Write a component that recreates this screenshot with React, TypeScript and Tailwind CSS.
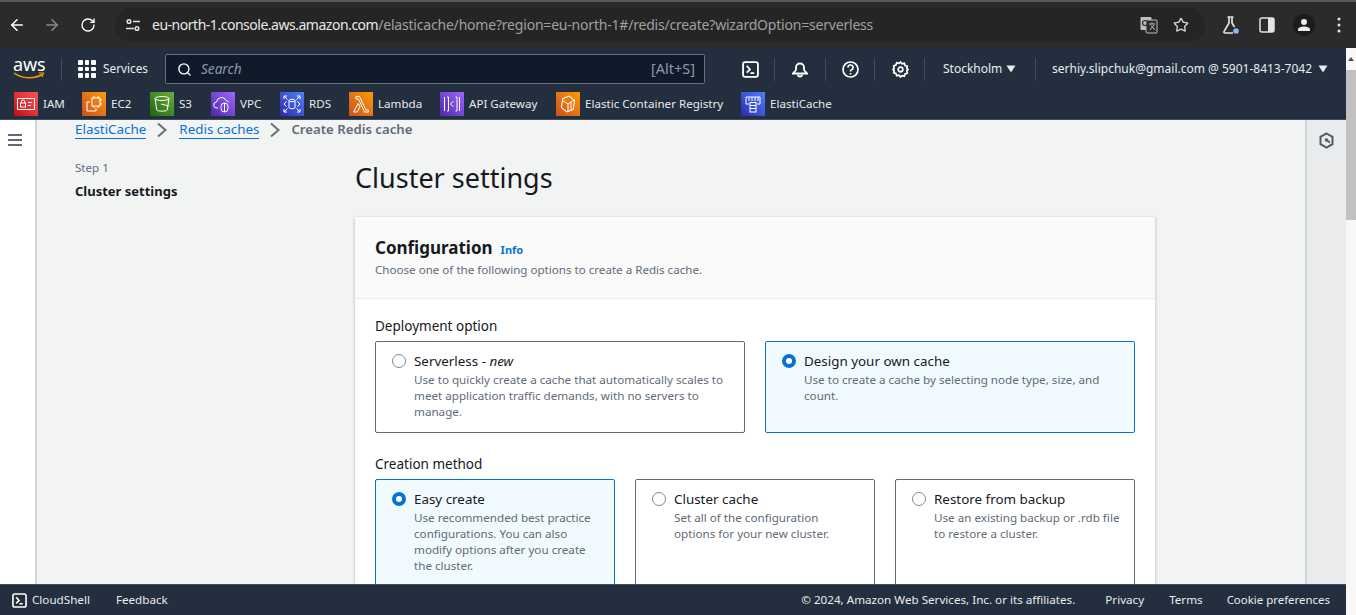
import React from "react";
import { ArrowLeft, ArrowRight, RotateCw, Star, Search } from "lucide-react";

const Ic = ({ from, to, children }: { from: string; to: string; children: React.ReactNode }) => (
  <span className={`w-6 h-6 shrink-0 flex items-center justify-center bg-linear-to-tr ${from} ${to}`}>
    <svg width="20" height="20" viewBox="0 0 20 20" fill="none" stroke="white" strokeWidth="1">{children}</svg>
  </span>
);

const shortcuts = [
  { label: "IAM", w: "w-[68px]", from: "from-[#bd0816]", to: "to-[#ff5252]", icon: <><path d="M1.500 4.500h17v11h-17z" /><rect x="4.500" y="9" width="5" height="4" /><path d="M5.500 9V7.500a1.500 1.500 0 0 1 3 0V9M12 8.500h4M12 11.500h3" /></> },
  { label: "EC2", w: "w-[68px]", from: "from-[#c8511b]", to: "to-[#ff9900]", icon: <><rect x="8" y="4" width="8" height="8" /><path d="M6 8H3v9h9v-3M10 2v2M14 2v2M10 12v2M14 12v2M16 6h2M16 10h2" /></> },
  { label: "S3", w: "w-[61px]", from: "from-[#1b660f]", to: "to-[#6cae3e]", icon: <><ellipse cx="10" cy="4.500" rx="7" ry="2" /><path d="M3 4.500l1.800 11.500c.5 1.500 9.900 1.500 10.400 0L17 4.500M9 10l8 2" /></> },
  { label: "VPC", w: "w-[69px]", from: "from-[#4d27a8]", to: "to-[#a166ff]", icon: <><path d="M5 14H4a3 3 0 0 1-.5-6A5 5 0 0 1 13 6.500a3.500 3.500 0 0 1 3 2" /><rect x="8" y="9" width="7" height="9" rx="3.500" /><path d="M11.500 9v9" /></> },
  { label: "RDS", w: "w-[69px]", from: "from-[#2e27ad]", to: "to-[#527fff]", icon: <><ellipse cx="10" cy="6.500" rx="3" ry="1.200" /><path d="M7 6.500v7c0 1.600 6 1.600 6 0v-7M2 2l3.500 3.500M18 2l-3.500 3.500M2 18l3.500-3.500M18 18l-3.500-3.500M2 5V2h3M15 2h3v3M2 15v3h3M18 15v3h-3M4.500 7.500L2 10l2.500 2.500M15.500 7.500L18 10l-2.500 2.500" /></> },
  { label: "Lambda", w: "w-[91px]", from: "from-[#c8511b]", to: "to-[#ff9900]", icon: <path d="M5 2.500h3.500l6.500 13.500h2.500v2h-4L7.500 5H5zM7.200 9.500L9 12.800 6.200 18H2.500z" /> },
  { label: "API Gateway", w: "w-[116px]", from: "from-[#4d27a8]", to: "to-[#a166ff]", icon: <><path d="M2.500 3v14M5 3h1.500v14H5M13.500 3H15v14h-1.500M17.500 3v14" /><path d="M11.500 7L8.500 10l3 3" /></> },
  { label: "Elastic Container Registry", w: "w-[185px]", from: "from-[#c8511b]", to: "to-[#ff9900]", icon: <><path d="M10 2l6 3.500v9L10 18l-6-3.500v-9z" transform="rotate(8 10 10)" /><path d="M10 10l6-4M10 10v8M10 10L4 6M13 8v8" /></> },
  { label: "ElastiCache", w: "", from: "from-[#2e27ad]", to: "to-[#527fff]", icon: <><path d="M3 3h14v7h-3M3 3v7h3" /><path d="M6 3v4M9 3v4M12 3v4M15 3v4" /><rect x="7" y="8.500" width="6" height="9.500" /><path d="M7 11.500h6M7 14.500h6" /></> },
];

const Divider = () => <span className="block w-px h-[23px] bg-[#414d5c]" />;

const Caret = ({ cls }: { cls?: string }) => (
  <svg width="10" height="8" viewBox="0 0 10 8" className={cls}><path d="M0.500 0.500h9L5 7.500z" fill="#e9ebed" /></svg>
);

const CloudShellIcon = ({ s = 17 }: { s?: number }) => (
  <svg width={s} height={s} viewBox="0 0 16 16" fill="none" stroke="white" strokeWidth="1.700" className="block">
    <rect x="1" y="1" width="14" height="14" rx="2" />
    <path d="M4.500 4.500L7.500 8l-3 3M8 11.500h3.500" />
  </svg>
);

const Radio = ({ on }: { on?: boolean }) =>
  on ? (
    <span className="w-3.5 h-3.5 rounded-full bg-[#0972d3] flex items-center justify-center shrink-0">
      <span className="w-1.5 h-1.5 rounded-full bg-white" />
    </span>
  ) : (
    <span className="block w-3.5 h-3.5 rounded-full border border-[#7d8998] bg-white shrink-0" />
  );

const Card = ({ on, title, desc, cls }: { on?: boolean; title: React.ReactNode; desc: string; cls: string }) => (
  <div className={`rounded-[2px] border flex gap-2 pl-[16px] pr-[12px] pt-[11px] ${on ? "border-[#0972d3] bg-[#f1faff]" : "border-[#5f6b7a] bg-white"} ${cls}`}>
    <div className="mt-[1px] shrink-0"><Radio on={on} /></div>
    <div>
      <div className="text-[13.4px] leading-[16px] text-[#16191f]">{title}</div>
      <div className="text-[11.65px] leading-[16px] text-[#5f6b7a] mt-[3px]">{desc}</div>
    </div>
  </div>
);

const Chevron = () => (
  <svg width="14" height="16" viewBox="0 0 14 16" fill="none" stroke="#687078" strokeWidth="2"><path d="M3 1.500L10.500 8 3 14.500" /></svg>
);

export default function App() {
  return (
    <div className="w-[1356px] h-[615px] overflow-hidden flex flex-col font-['Noto_Sans','Open_Sans',sans-serif] bg-white">
      {/* browser chrome */}
      <div className="h-12 shrink-0 bg-[#2b2b2b] border-t-2 border-[#5a5a5a] flex items-center pl-2 text-[#e3e3e3]">
        <div className="w-[107px] flex items-center">
          <ArrowLeft size={18} className="text-white" strokeWidth={2} />
          <ArrowRight size={18} className="ml-[17px] text-[#8a8a8a]" strokeWidth={2} />
          <RotateCw size={16} className="ml-[19px] text-white" strokeWidth={2} />
        </div>
        <div className="w-[1090px] h-[34px] rounded-full bg-[#252525] flex items-center pl-2.5">
          <svg width="16" height="16" viewBox="0 0 16 16" fill="none" stroke="#e3e3e3" strokeWidth="1.500" className="shrink-0">
            <circle cx="4" cy="4.500" r="1.800" /><path d="M8 4.500h7M1 11.500h8" /><circle cx="12" cy="11.500" r="1.800" />
          </svg>
          <div className="ml-[11px] text-[14px] leading-none whitespace-nowrap -mt-[1px]">
            <span className="text-[#e8e8e8] tracking-[-0.48px]">eu-north-1.console.aws.amazon.com</span>
            <span className="text-[#a0a0a0] tracking-[-0.2px]">/elasticache/home?region=eu-north-1#/redis/create?wizardOption=serverless</span>
          </div>
          <div className="ml-auto flex items-center mr-[15px] gap-[15px]">
            <svg width="18" height="18" viewBox="0 0 18 18">
              <rect x="0.500" y="1" width="11" height="13" rx="1" fill="#bdbdbd" />
              <rect x="6" y="4" width="11" height="13" rx="1" fill="#2b2b2b" stroke="#bdbdbd" />
              <circle cx="5" cy="7" r="2.500" fill="none" stroke="#2b2b2b" strokeWidth="1.200" />
              <path d="M9 8h6M12 6.500v1.500M10 14l4-5M11 9.500l4 4.500" stroke="#bdbdbd" fill="none" />
            </svg>
            <Star size={16} strokeWidth={2} className="text-[#d5d5d5] mr-[1px]" />
          </div>
        </div>
        <svg width="18" height="20" viewBox="0 0 18 20" fill="none" stroke="#e3e3e3" strokeWidth="1.700" className="ml-[17px]">
          <path d="M5.500 2h6M7 2v6L2 16.500c-.3.800.2 1.500 1 1.500h8M10 2v6l2.500 4" />
          <circle cx="14" cy="16" r="2.800" fill="#8ab4f8" stroke="none" />
        </svg>
        <svg width="16" height="16" viewBox="0 0 16 16" className="ml-[19px]">
          <rect x="1" y="1" width="14" height="14" rx="2" fill="none" stroke="#e3e3e3" strokeWidth="1.500" />
          <rect x="9" y="1" width="6" height="14" fill="#e3e3e3" />
        </svg>
        <span className="ml-[18px] w-[22px] h-[22px] rounded-full bg-[#1c1c1c] flex items-center justify-center">
          <svg width="14" height="14" viewBox="0 0 14 14" fill="#ececec"><circle cx="7" cy="4" r="3" /><path d="M1 13v-1.500C1 9.500 4 8.500 7 8.500s6 1 6 3V13z" /></svg>
        </span>
        <svg width="4" height="16" viewBox="0 0 4 16" fill="#e3e3e3" className="ml-[22px]">
          <circle cx="2" cy="2" r="1.500" /><circle cx="2" cy="8" r="1.500" /><circle cx="2" cy="14" r="1.500" />
        </svg>
      </div>

      <div className="flex-1 min-h-0 flex">
        <div className="w-[1346px] flex flex-col min-h-0">
          {/* AWS nav */}
          <div className="h-[72px] shrink-0 bg-[#232f3e] border-b border-[#414d5c]">
            <div className="h-10 pt-[2px] flex items-center text-[#e9ebed] text-[12px]">
              <div className="w-[61px] pl-[13px] h-full">
                <div className="text-white text-[18px] leading-none font-normal pt-[5px] tracking-[-0.1px]">aws</div>
                <svg width="32" height="8" viewBox="0 0 32 8" fill="none" className="block -mt-[1px]">
                  <path d="M1 1c8 6 21 6 28 1.500" stroke="#ff9900" strokeWidth="1.500" />
                  <path d="M26 1h4.500L29 5" stroke="#ff9900" strokeWidth="1.200" />
                </svg>
              </div>
              <Divider />
              <div className="ml-[16px] w-[18px] h-[18px] grid grid-cols-3 gap-[2px]">
                {Array.from({ length: 9 }).map((_, i) => <span key={i} className="bg-white rounded-[1px]" />)}
              </div>
              <span className="ml-[7px] w-[62px] text-[11.8px]">Services</span>
              <div className="w-[540px] h-[30px] rounded-[2px] border border-[#687078] bg-[#0f1b2a] flex items-center pl-[11px] pr-[9px]">
                <Search size={15} strokeWidth={2.200} className="text-white" />
                <span className="ml-[9px] mt-[1px] italic text-[13.6px] text-[#8d99a8]">Search</span>
                <span className="ml-auto text-[14.500px] text-[#8d99a8]">[Alt+S]</span>
              </div>
              <span className="ml-[37px]"><CloudShellIcon /></span>
              <span className="ml-[15px]"><Divider /></span>
              <svg width="16" height="17" viewBox="0 0 16 17" fill="none" stroke="white" strokeWidth="1.800" className="ml-[17px]">
                <path d="M1 12.500h14L12 9V6.500a4 4 0 0 0-8 0V9z" /><path d="M6 13.500a2 2 0 0 0 4 0" />
              </svg>
              <span className="ml-[17px]"><Divider /></span>
              <svg width="17" height="17" viewBox="0 0 17 17" fill="none" stroke="white" strokeWidth="1.700" className="ml-[16px]">
                <circle cx="8.500" cy="8.500" r="7.500" />
                <path d="M6 6.500a2.500 2.500 0 1 1 3.500 2.300c-.7.300-1 .8-1 1.700M8.500 12v1.500" />
              </svg>
              <span className="ml-[15px]"><Divider /></span>
              <svg width="17" height="17" viewBox="0 0 17 17" fill="none" stroke="white" strokeWidth="1.700" className="ml-[17px]">
                <path d="M8.500 1l1.500 1.800 2.300-.5.800 2.200 2.200.8-.5 2.200 1.200 1-1.200 1.500.5 2.200-2.200.8-.8 2.200-2.300-.5L8.500 16 7 14.200l-2.300.5-.8-2.200-2.200-.8.500-2.200L1 8.500l1.200-1.500-.5-2.200 2.200-.8.800-2.200 2.300.5z" />
                <circle cx="8.500" cy="8.500" r="2.300" />
              </svg>
              <span className="ml-[15px]"><Divider /></span>
              <span className="ml-[18px] w-[60px] whitespace-nowrap">Stockholm</span>
              <Caret cls="ml-[3px]" />
              <span className="ml-[19px]"><Divider /></span>
              <span className="ml-[16px] whitespace-nowrap">serhiy.slipchuk@gmail.com @ 5901-8413-7042</span>
              <Caret cls="ml-[6px]" />
            </div>
            <div className="h-[32px] flex items-start pl-[14px] pt-[4px] text-[11.6px] text-[#e9ebed]">
              {shortcuts.map((s) => (
                <div key={s.label} className={`flex items-center gap-[5px] whitespace-nowrap ${s.w}`}>
                  <Ic from={s.from} to={s.to}>{s.icon}</Ic>
                  <span>{s.label}</span>
                </div>
              ))}
            </div>
          </div>

          {/* middle */}
          <div className="flex-1 min-h-0 flex">
            <div className="w-[37px] shrink-0 bg-white border-r-2 border-[#d1d5db] pt-[14px] pl-[8px]">
              <div className="flex flex-col gap-[3px] w-[14px]">
                <span className="h-[2px] bg-[#5f6b7a]" /><span className="h-[2px] bg-[#5f6b7a]" /><span className="h-[2px] bg-[#5f6b7a]" />
              </div>
            </div>

            <div className="flex-1 min-w-0 bg-[#f2f3f3] overflow-hidden pl-[38px]">
              <div className="flex items-center h-[18px] text-[13.4px] mt-[1px]">
                <span className="text-[#0972d3] border-b border-[#0972d3] leading-[17px]">ElastiCache</span>
                <span className="ml-[9px] mr-[10px]"><Chevron /></span>
                <span className="text-[#0972d3] border-b border-[#0972d3] leading-[17px]">Redis caches</span>
                <span className="mx-[9px]"><Chevron /></span>
                <span className="text-[#5f6b7a] font-semibold text-[13.2px]">Create Redis cache</span>
              </div>
              <div className="flex mt-[11px]">
                <div className="w-[280px] shrink-0 pt-[10px]">
                  <div className="text-[11.6px] leading-[16px] text-[#5f6b7a]">Step 1</div>
                  <div className="text-[13px] leading-[16px] font-bold text-[#16191f] mt-[7px]">Cluster settings</div>
                </div>
                <div className="w-[800px]">
                  <h1 className="text-[27px] leading-[36px] text-[#16191f] mt-[10px]">Cluster settings</h1>
                  <div className="mt-[21px] bg-white shadow-[0_1px_3px_rgba(0,28,36,0.3)]">
                    <div className="h-[82px] bg-[#fafafa] border-b border-[#eaeded] px-[20px] pt-[18px]">
                      <div className="flex items-baseline gap-[8px]">
                        <span className="text-[17px] leading-[26px] font-bold text-[#16191f]">Configuration</span>
                        <span className="text-[11px] font-bold text-[#0972d3]">Info</span>
                      </div>
                      <div className="text-[11.6px] leading-[16px] text-[#5f6b7a] mt-[1px]">Choose one of the following options to create a Redis cache.</div>
                    </div>
                    <div className="pl-[20px] pt-[18px] pb-[40px]">
                      <div className="text-[13.5px] leading-[18px] text-[#16191f]">Deployment option</div>
                      <div className="flex gap-[20px] mt-[6px]">
                        <Card cls="w-[370px] h-[92px]" title={<>Serverless - <i>new</i></>} desc="Use to quickly create a cache that automatically scales to meet application traffic demands, with no servers to manage." />
                        <Card on cls="w-[370px] h-[92px]" title="Design your own cache" desc="Use to create a cache by selecting node type, size, and count." />
                      </div>
                      <div className="text-[13.5px] leading-[18px] text-[#16191f] mt-[22px]">Creation method</div>
                      <div className="flex gap-[20px] mt-[6px]">
                        <Card on cls="w-[240px] h-[124px]" title="Easy create" desc="Use recommended best practice configurations. You can also modify options after you create the cluster." />
                        <Card cls="w-[240px] h-[124px]" title="Cluster cache" desc="Set all of the configuration options for your new cluster." />
                        <Card cls="w-[240px] h-[124px]" title="Restore from backup" desc="Use an existing backup or .rdb file to restore a cluster." />
                      </div>
                    </div>
                  </div>
                </div>
              </div>
            </div>

            <div className="w-[41px] shrink-0 bg-[#e9ebed] border-l-2 border-[#d1d5db] pt-[12px] flex justify-center">
              <svg width="15" height="17" viewBox="0 0 15 17" fill="none" stroke="#545b64" strokeWidth="2">
                <path d="M7.500 1.500l6 3.400v7.200l-6 3.400-6-3.400V4.900z" />
                <circle cx="7.500" cy="8" r="1.800" fill="#545b64" stroke="none" />
                <path d="M8 8.500l3 2" />
              </svg>
            </div>
          </div>

          {/* footer */}
          <div className="h-[31px] shrink-0 bg-[#232f3e] border-t border-[#414d5c] flex items-center text-[11.65px] text-[#e9ebed] pl-[12px] pr-[16px]">
            <CloudShellIcon s={15} />
            <span className="ml-[5px]">CloudShell</span>
            <span className="ml-[26px]">Feedback</span>
            <span className="ml-auto">© 2024, Amazon Web Services, Inc. or its affiliates.</span>
            <span className="ml-[30px]">Privacy</span>
            <span className="ml-[25px]">Terms</span>
            <span className="ml-[24px] text-[11.45px]">Cookie preferences</span>
          </div>
        </div>

        {/* page scrollbar */}
        <div className="w-[10px] shrink-0 bg-[#f8f8f8] flex flex-col">
          <div className="h-[22px] flex items-center justify-center">
            <span className="w-0 h-0 border-x-[3.500px] border-x-transparent border-b-[4px] border-b-[#505050]" />
          </div>
          <div className="h-[150px] bg-[#c1c1c1]" />
        </div>
      </div>
    </div>
  );
}
